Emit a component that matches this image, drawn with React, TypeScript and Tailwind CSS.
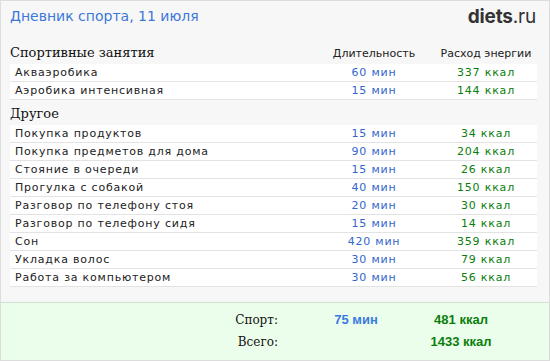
import React from "react";

type Row = { name: string; dur: string; kcal: string };

const sport: Row[] = [
  { name: "Акваэробика", dur: "60 мин", kcal: "337 ккал" },
  { name: "Аэробика интенсивная", dur: "15 мин", kcal: "144 ккал" },
];

const other: Row[] = [
  { name: "Покупка продуктов", dur: "15 мин", kcal: "34 ккал" },
  { name: "Покупка предметов для дома", dur: "90 мин", kcal: "204 ккал" },
  { name: "Стояние в очереди", dur: "15 мин", kcal: "26 ккал" },
  { name: "Прогулка с собакой", dur: "40 мин", kcal: "150 ккал" },
  { name: "Разговор по телефону стоя", dur: "20 мин", kcal: "30 ккал" },
  { name: "Разговор по телефону сидя", dur: "15 мин", kcal: "14 ккал" },
  { name: "Сон", dur: "420 мин", kcal: "359 ккал" },
  { name: "Укладка волос", dur: "30 мин", kcal: "79 ккал" },
  { name: "Работа за компьютером", dur: "30 мин", kcal: "56 ккал" },
];

const sans = "font-['DejaVu_Sans',Verdana,sans-serif]";
const serif = "font-['DejaVu_Serif','Liberation_Serif',serif]";

function DataRow({ r }: { r: Row }) {
  return (
    <div
      className={`grid grid-cols-[1fr_100px_100px] gap-x-[12px] pr-[1px] h-[18px] bg-white border-b border-[#e3e3e3] text-[11px] leading-[17px] tracking-[0.8px] ${sans}`}
    >
      <div className="pl-[5px] text-[#222] whitespace-nowrap">{r.name}</div>
      <div className="text-center text-[#3366cc] whitespace-nowrap">{r.dur}</div>
      <div className="text-center text-[#0b7d0b] whitespace-nowrap">{r.kcal}</div>
    </div>
  );
}

export default function App() {
  return (
    <div className="w-[550px] h-[361px] border border-[#dcdcdc] bg-[#f7f7f7] flex flex-col overflow-hidden">
      <div className="flex justify-between items-start h-[39px] pl-[9px] pr-[13px]">
        <div className={`${sans} text-[14px] leading-[17px] pt-[7px] text-[#3c78d8]`}>
          Дневник спорта, 11 июля
        </div>
        <div className="font-['Inter',sans-serif] text-[19px] leading-[22px] pt-[5px] text-[#333] tracking-[-0.2px]">
          <span className="font-bold">diets</span>
          <span className="font-normal">.ru</span>
        </div>
      </div>
      <div className="px-[9px] pr-[12px]">
        <div className="grid grid-cols-[1fr_100px_100px] gap-x-[12px] pr-[1px] h-[24px] items-end pb-[2px]">
          <div className={`${serif} text-[13px] leading-[18px] text-[#111]`}>Спортивные занятия</div>
          <div className={`${sans} text-[11px] leading-[16px] text-center text-[#222] whitespace-nowrap`}>Длительность</div>
          <div className={`${sans} text-[11px] leading-[16px] text-center text-[#222] whitespace-nowrap`}>Расход энергии</div>
        </div>
        {sport.map((r) => (
          <DataRow key={r.name} r={r} />
        ))}
        <div className="h-[25px] flex items-end pb-[2px]">
          <div className={`${serif} text-[13px] leading-[18px] text-[#111]`}>Другое</div>
        </div>
        {other.map((r) => (
          <DataRow key={r.name} r={r} />
        ))}
      </div>
      <div className="mt-auto h-[58px] bg-[#ebfeeb] border-t border-[#d2e2d2] pt-[6px]">
        <div className="flex h-[22px] items-center">
          <div className={`w-[277px] text-right ${serif} text-[12px] text-[#111]`}>Спорт:</div>
          <div className="ml-[18px] w-[120px] text-center font-['Liberation_Sans',Arial,sans-serif] font-bold text-[13px] text-[#3a7be0]">
            75 мин
          </div>
          <div className="w-[90px] text-center font-['Liberation_Sans',Arial,sans-serif] font-bold text-[13px] text-[#0b7d0b]">
            481 ккал
          </div>
        </div>
        <div className="flex h-[22px] items-center">
          <div className={`w-[277px] text-right ${serif} text-[12px] text-[#111]`}>Всего:</div>
          <div className="ml-[18px] w-[120px]" />
          <div className="w-[90px] text-center font-['Liberation_Sans',Arial,sans-serif] font-bold text-[13px] text-[#0b7d0b]">
            1433 ккал
          </div>
        </div>
      </div>
    </div>
  );
}
